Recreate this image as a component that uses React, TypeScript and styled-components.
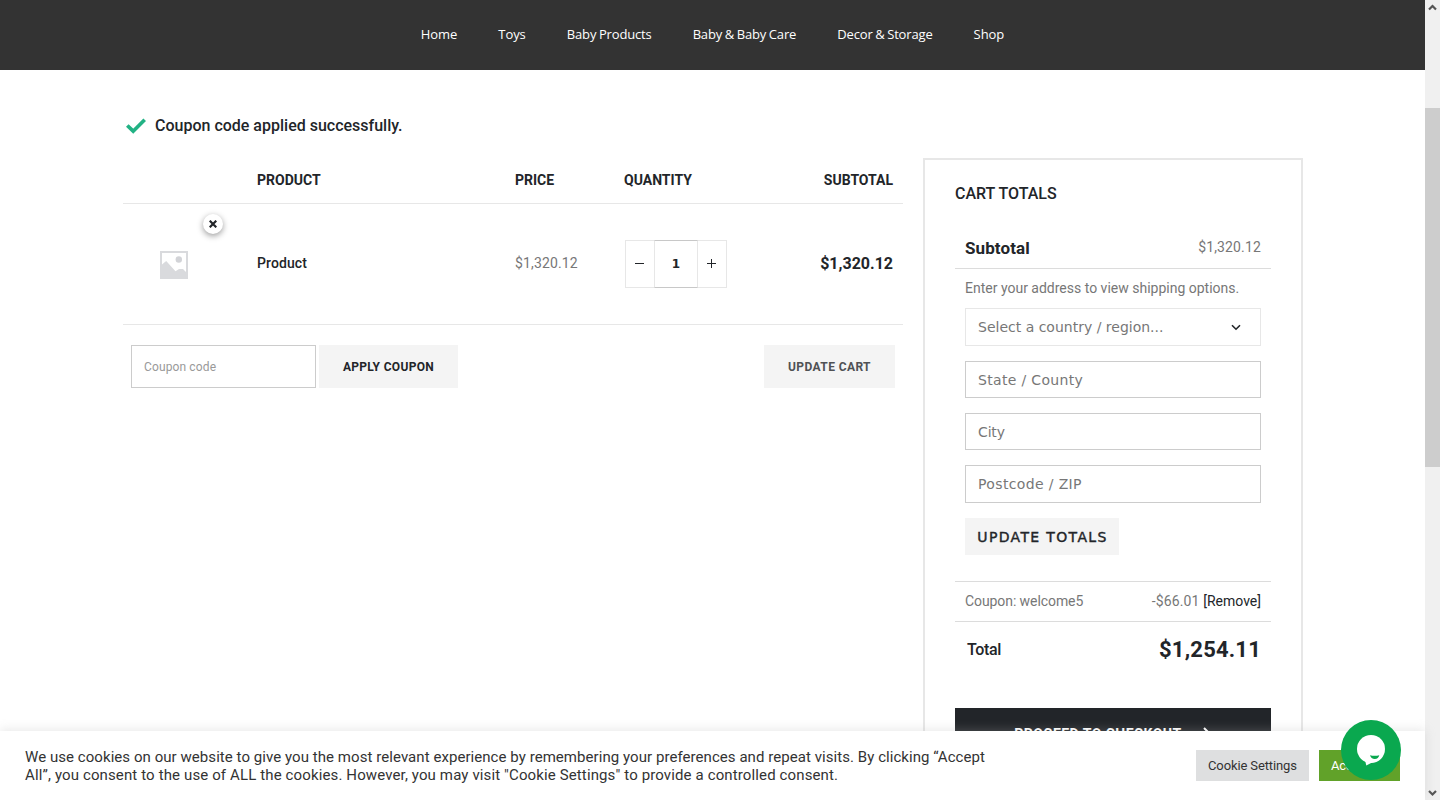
import React from "react";
import styled, { createGlobalStyle } from "styled-components";

const ink = "#222529";
const grey = "#777";
const green = "#0aa84f";
const sans = `Roboto, "Liberation Sans", sans-serif`;
const wide = `"DejaVu Sans", sans-serif`;

const Global = createGlobalStyle`
  *, *::before, *::after { box-sizing: border-box; }
  html, body { margin: 0; padding: 0; height: 100%; overflow: hidden; background: #fff; }
  button, input { margin: 0; border-radius: 0; outline: none; }
`;

const Screen = styled.div`
  position: relative;
  display: grid;
  grid-template-columns: 1fr 15px;
  height: 800px;
  overflow: hidden;
  background: #fff;
  color: ${ink};
  font: 14px/20px ${sans};
`;

const Page = styled.div`
  display: flex;
  flex-direction: column;
  min-width: 0;
  height: 800px;
  overflow: hidden;
`;

const Nav = styled.nav`
  flex: none;
  display: flex;
  justify-content: center;
  align-items: center;
  gap: 41px;
  height: 70px;
  padding-bottom: 2px;
  background: #333;
`;

const NavLink = styled.a<{ $tight: boolean }>`
  color: #fff;
  font: 13px/20px "Open Sans", sans-serif;
  letter-spacing: ${(p) => (p.$tight ? -0.15 : -0.05)}px;
  word-spacing: ${(p) => (p.$tight ? -0.6 : 0)}px;
  white-space: nowrap;
`;

const Main = styled.main`
  display: flex;
  flex-direction: column;
  width: 1180px;
  margin-left: 123px;
  padding-top: 43px;
`;

const Notice = styled.div`
  display: flex;
  align-items: center;
  gap: 9px;
  height: 25px;
  padding-left: 3px;
  font-size: 16px;
  font-weight: 500;
`;

const Columns = styled.div`
  display: grid;
  grid-template-columns: 780px 380px;
  gap: 20px;
  margin-top: 20px;
`;

const Cart = styled.section`
  min-width: 0;
`;

const TableRow = styled.div<{ $h: number }>`
  display: grid;
  grid-template-columns: 134px 258px 109px 150px 1fr;
  align-items: center;
  height: ${(p) => p.$h}px;
  padding-right: 10px;
  border-bottom: 1px solid #e7e7e7;
`;

const HeadCell = styled.div<{ $end?: boolean }>`
  justify-self: ${(p) => (p.$end ? "end" : "start")};
  padding-bottom: 2px;
  font-weight: 700;
`;

const Thumb = styled.div`
  position: relative;
  display: flex;
  justify-content: center;
  align-items: center;
  width: 100px;
  height: 100px;
  padding: 1px 0 0 1px;
`;

const RemoveItem = styled.button`
  position: absolute;
  top: 0;
  right: 0;
  display: grid;
  place-items: center;
  width: 20px;
  height: 20px;
  padding: 0;
  border: 0;
  border-radius: 50%;
  background: #fff;
  box-shadow: 0 2px 6px rgba(0, 0, 0, 0.4);
`;

const ProductName = styled.span`
  padding-bottom: 2px;
  font-weight: 500;
  letter-spacing: 0.1px;
`;

const Price = styled.span`
  padding-bottom: 2px;
  color: ${grey};
  letter-spacing: 0.15px;
`;

const LineTotal = styled.span`
  justify-self: end;
  font-size: 16px;
  font-weight: 700;
`;

const Quantity = styled.div`
  display: grid;
  grid-template-columns: 29px 44px 29px;
  width: 102px;
  height: 48px;
  margin-left: 1px;
`;

const Step = styled.button<{ $side: "left" | "right" }>`
  display: grid;
  place-items: center;
  padding: 0 2px 1px 0;
  border: 1px solid #e7e7e7;
  border-${(p) => (p.$side === "left" ? "right" : "left")}: 0;
  background: #fff;
`;

const Count = styled.div`
  display: grid;
  place-items: center;
  border: 1px solid #e7e7e7;
  border-top-color: #c8c8c8;
  border-bottom-color: #c8c8c8;
  font: 700 12px/20px ${wide};
`;

const Actions = styled.div`
  display: flex;
  align-items: center;
  height: 43px;
  margin-top: 20px;
  padding: 0 8px;
`;

const CouponInput = styled.div`
  width: 185px;
  height: 43px;
  margin-right: 3px;
  padding: 0 12px;
  border: 1px solid #ccc;
  color: #999;
  font-size: 12px;
  line-height: 42px;
  letter-spacing: 0.13px;
`;

const FlatButton = styled.button<{ $w: number; $push?: boolean; $dim?: boolean }>`
  width: ${(p) => p.$w}px;
  height: 43px;
  padding: 1px 0 0;
  margin-left: ${(p) => (p.$push ? "auto" : 0)};
  border: 0;
  background: #f4f4f4;
  color: ${(p) => (p.$dim ? "#4f5154" : ink)};
  font: 700 12px/42px ${sans};
  letter-spacing: ${(p) => (p.$dim ? 0.4 : 0.32)}px;
  white-space: nowrap;
`;

const Totals = styled.aside`
  height: 700px;
  padding: 24px 30px 0;
  border: 2px solid #e7e7e7;
`;

const TotalsTitle = styled.h2`
  margin: 0;
  font-size: 16px;
  font-weight: 500;
  line-height: 20px;
`;

const Line = styled.div<{ $h: number; $mt?: number; $last?: boolean; $pad?: number }>`
  display: flex;
  justify-content: space-between;
  align-items: center;
  height: ${(p) => p.$h}px;
  margin-top: ${(p) => p.$mt ?? 0}px;
  padding: 0 10px 0 ${(p) => p.$pad ?? 10}px;
  border-bottom: ${(p) => (p.$last ? "0" : "1px solid #dcdcdc")};
  color: ${grey};
`;

const LineText = styled.span<{ $ls?: number }>`
  padding-bottom: 2px;
  letter-spacing: ${(p) => p.$ls ?? 0}px;
`;

const SubtotalLabel = styled.span`
  color: ${ink};
  font-size: 17px;
  font-weight: 700;
  letter-spacing: 0.1px;
`;

const TotalLabel = styled.span`
  color: ${ink};
  font-size: 16px;
  font-weight: 500;
  letter-spacing: -0.35px;
`;

const GrandTotal = styled.span`
  color: ${ink};
  font-size: 22px;
  font-weight: 700;
  letter-spacing: 0.2px;
`;

const RemoveLink = styled.a`
  color: ${ink};
  letter-spacing: 0;
`;

const Shipping = styled.div`
  display: flex;
  flex-direction: column;
  align-items: flex-start;
  gap: 15px;
  height: 313px;
  padding: 9px 10px 0;
  border-bottom: 1px solid #dcdcdc;
  color: ${grey};
`;

const Hint = styled.span`
  margin-bottom: -5px;
`;

const Field = styled.div<{ $select?: boolean; $h?: number; $ls?: number }>`
  display: flex;
  justify-content: space-between;
  align-items: center;
  width: 296px;
  height: ${(p) => p.$h ?? 37}px;
  padding: 0 18px 0 12px;
  border: 1px solid ${(p) => (p.$select ? "#e7e7e7" : "#ccc")};
  color: ${grey};
  font: 14px/20px ${wide};
  letter-spacing: ${(p) => p.$ls ?? 0}px;
`;

const UpdateTotals = styled.button`
  width: 154px;
  height: 37px;
  padding: 1px 0 0 1px;
  border: 0;
  background: #f4f4f4;
  color: ${ink};
  font: 14px/36px ${wide};
  letter-spacing: 1.35px;
  -webkit-text-stroke: 0.4px ${ink};
  white-space: nowrap;
`;

const Checkout = styled.button`
  display: flex;
  justify-content: center;
  align-items: center;
  gap: 14px;
  width: 316px;
  height: 51px;
  margin-top: 31px;
  padding: 0;
  border: 0;
  background: #222529;
  color: #fff;
  font: 700 14px/20px ${sans};
  letter-spacing: 0.45px;
`;

const CookieBar = styled.div`
  position: absolute;
  left: 0;
  bottom: 0;
  display: flex;
  align-items: center;
  width: 1425px;
  height: 69px;
  padding: 0 25px;
  background: #fff;
  box-shadow: 0 -1px 10px 0 rgba(172, 171, 171, 0.3);
  color: #333;
`;

const CookieText = styled.p`
  width: 1171px;
  margin: 0 0 -1px;
  font-size: 15px;
  line-height: 18px;
  white-space: nowrap;
`;

const CookieTextLine = styled.span<{ $ls: number }>`
  display: block;
  letter-spacing: ${(p) => p.$ls}px;
`;

const CookieButton = styled.button<{ $accept?: boolean }>`
  width: ${(p) => (p.$accept ? 81 : 113)}px;
  height: 31px;
  margin-left: ${(p) => (p.$accept ? 10 : 0)}px;
  padding: 0 0 0 12px;
  border: 0;
  background: ${(p) => (p.$accept ? "#61a229" : "#dedfe0")};
  color: ${(p) => (p.$accept ? "#fff" : "#333")};
  font: 13px/31px ${sans};
  letter-spacing: -0.12px;
  text-align: left;
  white-space: nowrap;
`;

const Chat = styled.button`
  position: absolute;
  left: 1341px;
  top: 720px;
  width: 60px;
  height: 60px;
  padding: 0;
  border: 0;
  border-radius: 50%;
  background: ${green};
`;

const Scrollbar = styled.div`
  display: flex;
  flex-direction: column;
  justify-content: space-between;
  align-items: center;
  height: 800px;
  background: #f0f0f0;
`;

const ScrollThumb = styled.div`
  width: 15px;
  height: 359px;
  margin-bottom: 225px;
  background: #cdcdcd;
`;

const links = ["Home", "Toys", "Baby Products", "Baby & Baby Care", "Decor & Storage", "Shop"];

export default function App() {
  return (
    <>
      <Global />
      <Screen>
        <Page>
          <Nav>
            {links.map((t) => (
              <NavLink key={t} $tight={t.includes(" ")}>{t}</NavLink>
            ))}
          </Nav>
          <Main>
            <Notice>
              <svg width="20" height="16" viewBox="0 0 20 16">
                <path d="M1.300 7.500 7.200 13.200 18.700 1.700" fill="none" stroke="#22b284" strokeWidth="3.700" />
              </svg>
              <span>Coupon code applied successfully.</span>
            </Notice>
            <Columns>
              <Cart>
                <TableRow $h={46}>
                  <HeadCell />
                  <HeadCell>PRODUCT</HeadCell>
                  <HeadCell>PRICE</HeadCell>
                  <HeadCell>QUANTITY</HeadCell>
                  <HeadCell $end>SUBTOTAL</HeadCell>
                </TableRow>
                <TableRow $h={121}>
                  <Thumb>
                    <svg width="28" height="28" viewBox="0 0 28 28">
                      <rect width="28" height="28" fill="#d9dadd" />
                      <path d="M2 2h24v19l-3-3h-4l-3.500 2.200L6.200 10 2 13.500z" fill="#fff" />
                      <circle cx="18.800" cy="8.500" r="3.200" fill="#d2d3d7" />
                    </svg>
                    <RemoveItem>
                      <svg width="8" height="8" viewBox="0 0 8 8">
                        <path d="M.7.7l6.600 6.600M7.300.7L.7 7.300" stroke={ink} strokeWidth="2.200" />
                      </svg>
                    </RemoveItem>
                  </Thumb>
                  <ProductName>Product</ProductName>
                  <Price>$1,320.12</Price>
                  <Quantity>
                    <Step $side="left">
                      <svg width="9" height="9"><path d="M0 4.500h9" stroke={ink} /></svg>
                    </Step>
                    <Count>1</Count>
                    <Step $side="right">
                      <svg width="9" height="9"><path d="M0 4.500h9M4.500 0v9" stroke={ink} /></svg>
                    </Step>
                  </Quantity>
                  <LineTotal>$1,320.12</LineTotal>
                </TableRow>
                <Actions>
                  <CouponInput>Coupon code</CouponInput>
                  <FlatButton $w={139}>APPLY COUPON</FlatButton>
                  <FlatButton $w={131} $push $dim>UPDATE CART</FlatButton>
                </Actions>
              </Cart>
              <Totals>
                <TotalsTitle>CART TOTALS</TotalsTitle>
                <Line $h={42} $mt={23}>
                  <SubtotalLabel>Subtotal</SubtotalLabel>
                  <LineText $ls={0.15}>$1,320.12</LineText>
                </Line>
                <Shipping>
                  <Hint>Enter your address to view shipping options.</Hint>
                  <Field $select $h={38}>
                    Select a country / region...
                    <svg width="12" height="8" viewBox="0 0 12 8">
                      <path d="M2 2.200l4 4 4-4" fill="none" stroke={ink} strokeWidth="1.600" />
                    </svg>
                  </Field>
                  <Field $ls={0.33}>State / County</Field>
                  <Field $ls={-0.15}>City</Field>
                  <Field $ls={0.36} $h={38}>Postcode / ZIP</Field>
                  <UpdateTotals>UPDATE TOTALS</UpdateTotals>
                </Shipping>
                <Line $h={40}>
                  <LineText $ls={-0.08}>Coupon: welcome5</LineText>
                  <LineText $ls={0.15}>-$66.01 <RemoveLink>[Remove]</RemoveLink></LineText>
                </Line>
                <Line $h={55} $last $pad={12}>
                  <TotalLabel>Total</TotalLabel>
                  <GrandTotal>$1,254.11</GrandTotal>
                </Line>
                <Checkout>
                  <span>PROCEED TO CHECKOUT</span>
                  <svg width="16" height="14" viewBox="0 0 16 14">
                    <path d="M0 7h14M8 1l6 6-6 6" fill="none" stroke="#fff" strokeWidth="2" />
                  </svg>
                </Checkout>
              </Totals>
            </Columns>
          </Main>
        </Page>
        <Scrollbar>
          <svg width="9" height="14"><path d="M1 9.500l3.500-3.500L8 9.500" fill="none" stroke="#555" strokeWidth="2.200" /></svg>
          <ScrollThumb />
          <svg width="9" height="14"><path d="M1 5l3.500 3.500L8 5" fill="none" stroke="#555" strokeWidth="2.200" /></svg>
        </Scrollbar>
        <CookieBar>
          <CookieText>
            <CookieTextLine $ls={0.058}>
              We use cookies on our website to give you the most relevant experience by remembering your preferences and repeat visits. By clicking “Accept
            </CookieTextLine>
            <CookieTextLine $ls={0.127}>
              All”, you consent to the use of ALL the cookies. However, you may visit "Cookie Settings" to provide a controlled consent.
            </CookieTextLine>
          </CookieText>
          <CookieButton>Cookie Settings</CookieButton>
          <CookieButton $accept>Accept All</CookieButton>
        </CookieBar>
        <Chat>
          <svg width="60" height="60" viewBox="0 0 60 60">
            <circle cx="30" cy="29" r="14" fill="#fff" />
            <path d="M24 40l1.300 5.500L34 41z" fill="#fff" />
            <path d="M29 35.200q4.700 1.300 9.300 0-.8 3.700-4.500 3.700-3.800 0-4.800-3.700z" fill={green} />
          </svg>
        </Chat>
      </Screen>
    </>
  );
}
